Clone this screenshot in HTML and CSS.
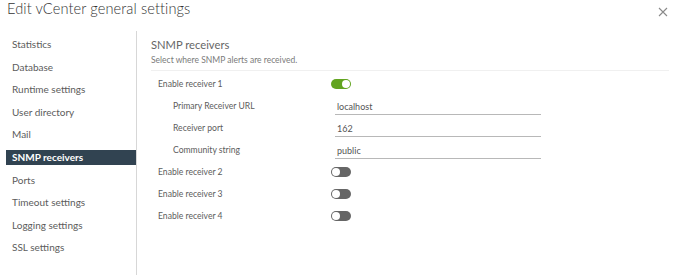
FILE: index.html
```html
<!DOCTYPE html>
<html lang="en">
<head>
  <meta charset="UTF-8" />
  <title>Edit vCenter general settings</title>
  <link rel="stylesheet" href="styles.css">
</head>
<body>

<div class="modal">
  <div class="modal-head">
    <h1>Edit vCenter general settings</h1>
    <button class="close" aria-label="Close">
      <svg width="10" height="10" viewBox="0 0 10 10"><path d="M1 1 L9 9 M9 1 L1 9" stroke="#8a8a8a" stroke-width="1.1" fill="none"/></svg>
    </button>
  </div>

  <div class="modal-body">
    <nav class="side">
      <a>Statistics</a>
      <a>Database</a>
      <a>Runtime settings</a>
      <a>User directory</a>
      <a>Mail</a>
      <a class="active">SNMP receivers</a>
      <a>Ports</a>
      <a>Timeout settings</a>
      <a>Logging settings</a>
      <a>SSL settings</a>
    </nav>

    <section class="content">
      <h2>SNMP receivers</h2>
      <p class="sub">Select where SNMP alerts are received.</p>

      <div class="form">
        <div class="row">
          <label>Enable receiver 1</label>
          <span class="toggle on"></span>
        </div>
        <div class="row nested">
          <label>Primary Receiver URL</label>
          <input type="text" value="localhost">
        </div>
        <div class="row nested">
          <label>Receiver port</label>
          <input type="text" value="162">
        </div>
        <div class="row nested">
          <label>Community string</label>
          <input type="text" value="public">
        </div>
        <div class="row">
          <label>Enable receiver 2</label>
          <span class="toggle"></span>
        </div>
        <div class="row">
          <label>Enable receiver 3</label>
          <span class="toggle"></span>
        </div>
        <div class="row">
          <label>Enable receiver 4</label>
          <span class="toggle"></span>
        </div>
      </div>
    </section>
  </div>
</div>

</body>
</html>
```

FILE: styles.css
```css
* { margin: 0; padding: 0; box-sizing: border-box; }

body {
  font-family: 'Lato', 'Open Sans', sans-serif;
  background: #fff;
  color: #5c5c5c;
  width: 677px;
  height: 275px;
  overflow: hidden;
}

.modal-head {
  height: 31px;
  display: flex;
  justify-content: space-between;
  align-items: flex-start;
  padding: 0 9px 0 7px;
}

h1 {
  font-size: 14.6px;
  font-weight: 300;
  color: #333;
  line-height: 18px;
  letter-spacing: 0.1px;
}

.close {
  background: none;
  border: none;
  margin-top: 5px;
  cursor: pointer;
}

.modal-body {
  display: flex;
  height: 244px;
}

.side {
  width: 137px;
  border-right: 1px solid #d7d7d7;
  padding-top: 2px;
  display: flex;
  flex-direction: column;
}

.side a {
  height: 22.6px;
  line-height: 22.6px;
  font-size: 10px;
  color: #5c5c5c;
  padding-left: 6px;
  margin-left: 6px;
}

.side a.active {
  background: #314351;
  color: #fff;
  font-weight: 700;
  height: 15px;
  line-height: 15px;
  margin: 3.8px 0 3.8px 6px;
}

.content {
  flex: 1;
  padding: 7px 8px 0 14px;
}

h2 {
  font-size: 11.2px;
  font-weight: 400;
  color: #666;
  line-height: 14px;
}

.sub {
  font-size: 8.5px;
  color: #7a7a7a;
  margin-top: 2px;
  line-height: 12px;
}

.form {
  margin-top: 4px;
  border-top: 1px solid #f0f0f0;
  padding-top: 2px;
}

.row {
  display: grid;
  grid-template-columns: 173px 1fr;
  align-items: center;
  height: 22px;
  padding-left: 7px;
}

.row label {
  font-size: 8.6px;
  color: #5c5c5c;
}

.row.nested label {
  padding-left: 15px;
}

.row input {
  width: 206px;
  margin-left: 4px;
  border: none;
  border-bottom: 1px solid #b8b8b8;
  font-family: inherit;
  font-size: 9px;
  color: #555;
  padding: 3px 2px 2px 2px;
  outline: none;
}

.toggle {
  display: inline-block;
  width: 20px;
  height: 10px;
  border-radius: 5px;
  background: #666;
  position: relative;
}

.toggle::after {
  content: "";
  position: absolute;
  top: 1px;
  left: 1px;
  width: 8px;
  height: 8px;
  border-radius: 50%;
  background: #fff;
}

.toggle.on {
  background: #62a420;
}

.toggle.on::after {
  left: 11px;
}
```
